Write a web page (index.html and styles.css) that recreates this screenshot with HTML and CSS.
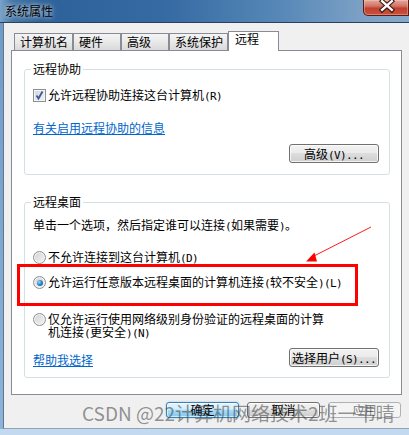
FILE: index.html
```html
<!DOCTYPE html>
<html lang="zh-CN">
<head>
<meta charset="utf-8">
<title>系统属性</title>
<link rel="stylesheet" href="styles.css">
</head>
<body>
<div class="win">
  <div class="titlebar">
    <span class="title">系统属性</span>
    <div class="close">
      <svg width="46" height="16" viewBox="0 0 46 16">
        <path d="M19.5 1 L29.5 10 M29.5 1 L19.5 10" stroke="#3b1612" stroke-width="4.6" stroke-linecap="square"/>
        <path d="M19.5 1 L29.5 10 M29.5 1 L19.5 10" stroke="#ffffff" stroke-width="2.4" stroke-linecap="square"/>
      </svg>
    </div>
  </div>
  <div class="mid">
    <div class="lframe"></div>
    <div class="client">
      <div class="tabs">
        <div class="tab w59">计算机名</div>
        <div class="tab w48">硬件</div>
        <div class="tab w48">高级</div>
        <div class="tab w59">系统保护</div>
        <div class="tab active">远程</div>
      </div>
      <div class="panel">
        <fieldset class="group g1">
          <legend>远程协助</legend>
          <div class="row check-row">
            <span class="checkbox">
              <svg width="11" height="11" viewBox="0 0 11 11"><path d="M2.5 5.5 L4.5 8.5 L8.5 1.5" fill="none" stroke="#3d5a98" stroke-width="1.8"/></svg>
            </span>
            <span>允许远程协助连接这台计算机<span class="m">(R)</span></span>
          </div>
          <div class="row link-row"><a class="link">有关启用远程协助的信息</a></div>
          <div class="btn-row"><button class="btn">高级<span class="m">(V)...</span></button></div>
        </fieldset>
        <fieldset class="group g2">
          <legend>远程桌面</legend>
          <div class="hint">单击一个选项，然后指定谁可以连接<span class="m">(</span>如果需要<span class="m">)</span>。</div>
          <div class="row radio-row r1"><span class="radio"></span><span>不允许连接到这台计算机<span class="m">(D)</span></span></div>
          <div class="row radio-row r2"><span class="radio on"><span class="dot"></span></span><span>允许运行任意版本远程桌面的计算机连接<span class="m">(</span>较不安全<span class="m">)(L)</span></span></div>
          <div class="row radio-row r3"><span class="radio"></span><span class="two">仅允许运行使用网络级别身份验证的远程桌面的计算<br>机连接<span class="m">(</span>更安全<span class="m">)(N)</span></span></div>
          <div class="btn-row split"><a class="link">帮助我选择</a><button class="btn">选择用户<span class="m">(S)...</span></button></div>
        </fieldset>
      </div>
      <div class="footer">
        <button class="btn fbtn default">确定</button>
        <button class="btn fbtn">取消</button>
        <button class="btn fbtn disabled">应用</button>
      </div>
    </div>
  </div>
  <div class="bframe"></div>

  <div class="redbox"></div>
  <svg class="arrow" width="409" height="435" viewBox="0 0 409 435">
    <line x1="371" y1="227" x2="312" y2="257" stroke="#ff1a1a" stroke-width="1"/>
    <polygon points="306,261.5 317,261.5 314.5,252.5" fill="#ff0000"/>
  </svg>
  <div class="watermark">CSDN @22计算机网络技术2班一韦晴</div>
</div>
</body>
</html>
```
FILE: styles.css
```css
* { box-sizing: border-box; }
html, body { margin: 0; padding: 0; }
body {
  width: 409px;
  height: 435px;
  overflow: hidden;
  font-family: "Noto Sans CJK SC", "Noto Sans", sans-serif;
  font-size: 12px;
  color: #000;
  background: #f0f0f0;
}
.win { position: relative; width: 409px; height: 435px; overflow: hidden; }

.titlebar {
  height: 23px;
  border-bottom: 1px solid #27415e;
  background: linear-gradient(90deg, #7aa3c9 0, #4476a7 3%, #2d6199 10%, #356aa2 40%, #5687b7 68%, #7ba0c5 88%, #86a8ca 100%);
  display: flex;
  align-items: flex-start;
  justify-content: space-between;
}
.title {
  margin: 4px 0 0 5px;
  line-height: 14px;
  color: #000;
  text-shadow: 0 0 4px rgba(255,255,255,.75), 0 0 8px rgba(255,255,255,.5);
}
.close {
  width: 46px;
  height: 16px;
  border: 1px solid #5a1c14;
  border-top: none;
  border-radius: 0 0 0 5px;
  background: linear-gradient(#e3a99c 0%, #d27566 40%, #c1402f 55%, #c9523c 100%);
  box-shadow: inset 0 0 0 1px rgba(255,220,210,.35);
  display: flex;
}
.close svg { display: block; margin-left: -1px; }

.mid { display: flex; height: 406px; }
.lframe { width: 3px; background: linear-gradient(#6f9bc6, #8db3d8); }
.client {
  flex: 1;
  border-left: 1px solid #5f7690;
  border-bottom: 1px solid #8fa4b9;
  background: #f0f0f0;
  padding-top: 8px;
}
.bframe { height: 6px; background: #c3d9ef; }

/* tabs */
.tabs {
  display: flex;
  align-items: flex-end;
  height: 19px;
  padding-left: 10px;
  position: relative;
  z-index: 2;
}
.tab {
  height: 17px;
  border: 1px solid #898c95;
  border-bottom: none;
  background: linear-gradient(#f4f4f4, #e9e9e9 50%, #d9d9d9);
  padding-left: 5px;
  line-height: 16px;
  white-space: nowrap;
}
.w59 { width: 59px; }
.w48 { width: 48px; }
.tab.active {
  width: 51px;
  height: 20px;
  margin-bottom: -1px;
  background: #fff;
  padding-left: 6px;
  line-height: 14px;
}

.panel {
  margin-left: 7px;
  width: 391px;
  height: 345px;
  border: 1px solid #898c95;
  background: #fff;
  padding: 0 11px 0 12px;
  position: relative;
  z-index: 1;
}

.group {
  margin: 0;
  min-width: 0;
  border: 1px solid #d5dfe5;
  border-radius: 3px;
  padding: 0 10px 0 8px;
}
.group legend {
  padding: 0 2px;
  margin-left: -2px;
  line-height: 14px;
}
.g1 { margin-top: 11px; padding-bottom: 11px; }
.g2 { margin-top: 20px; padding-bottom: 10px; }

.row { display: flex; align-items: center; line-height: 13px; }
.check-row { margin-top: 13px; height: 13px; }
.link-row { margin-top: 19px; height: 13px; }
.link { color: #0066cc; text-decoration: underline; cursor: pointer; }

.checkbox {
  width: 13px;
  height: 13px;
  margin-right: 2px;
  border: 1px solid #8e8f8f;
  background: linear-gradient(135deg, #d3d5d8, #f2f3f4);
  box-shadow: inset 0 0 0 1px #f5f5f5;
  display: flex;
  align-items: center;
  justify-content: center;
}
.checkbox svg { display: block; }

.btn-row { display: flex; justify-content: flex-end; margin-top: 10px; }
.btn-row.split { justify-content: space-between; align-items: center; }
.btn-row.split .link { margin-top: 3px; line-height: 13px; }

.btn {
  font: inherit;
  color: #000;
  width: 90px;
  height: 19px;
  padding: 0;
  line-height: 17px;
  text-align: center;
  border: 1px solid #707070;
  border-radius: 3px;
  background: linear-gradient(#f2f2f2 0, #ebebeb 45%, #dddddd 50%, #cfcfcf 100%);
  box-shadow: inset 0 0 0 1px rgba(255,255,255,.75);
}

.hint { margin-top: 9px; line-height: 14px; height: 14px; }
.radio-row { height: 13px; }
.r1 { margin-top: 19px; }
.r2 { margin-top: 12px; }
.r3 { margin-top: 23px; height: 26px; align-items: flex-start; }
.two { line-height: 13px; }
.radio {
  width: 13px;
  height: 13px;
  flex: none;
  margin-right: 2px;
  border: 1px solid #8e8f8f;
  border-radius: 50%;
  background: linear-gradient(135deg, #cfd1d4, #f5f5f6);
  box-shadow: inset 0 0 0 1px #f6f6f6;
  display: flex;
  align-items: center;
  justify-content: center;
}
.r3 .radio { margin-top: 1px; }
.dot {
  width: 6px;
  height: 6px;
  border-radius: 50%;
  background: radial-gradient(circle at 35% 35%, #9fdcff 0, #2b8ad0 45%, #0b4f8f 100%);
}

.m {
  font-family: "DejaVu Sans Mono", monospace;
  font-size: 11px;
  letter-spacing: -0.62px;
}

.footer {
  display: flex;
  justify-content: flex-end;
  gap: 8px;
  padding-right: 8px;
  margin-top: 7px;
}
.fbtn { width: 73px; height: 16px; line-height: 14px; }
.fbtn.default {
  border-color: #3c7fb1;
  background: linear-gradient(#e6f5fd 0, #d3eefc 45%, #a9dcf7 50%, #86c8ee 100%);
  box-shadow: inset 0 0 0 1px rgba(255,255,255,.6), 0 0 2px #7fc4ee;
}
.fbtn.disabled {
  border-color: #adb2b5;
  background: #f4f4f4;
  color: #838383;
  box-shadow: none;
}

/* annotations */
.redbox {
  position: absolute;
  left: 17px;
  top: 264px;
  width: 341px;
  height: 42px;
  border: 3px solid #ff0000;
  z-index: 5;
}
.arrow { position: absolute; left: 0; top: 0; z-index: 5; pointer-events: none; }
.watermark {
  position: absolute;
  left: 82px;
  top: 402px;
  font-size: 19px;
  line-height: 22px;
  white-space: nowrap;
  color: rgba(60,60,60,.55);
  z-index: 6;
}
```
